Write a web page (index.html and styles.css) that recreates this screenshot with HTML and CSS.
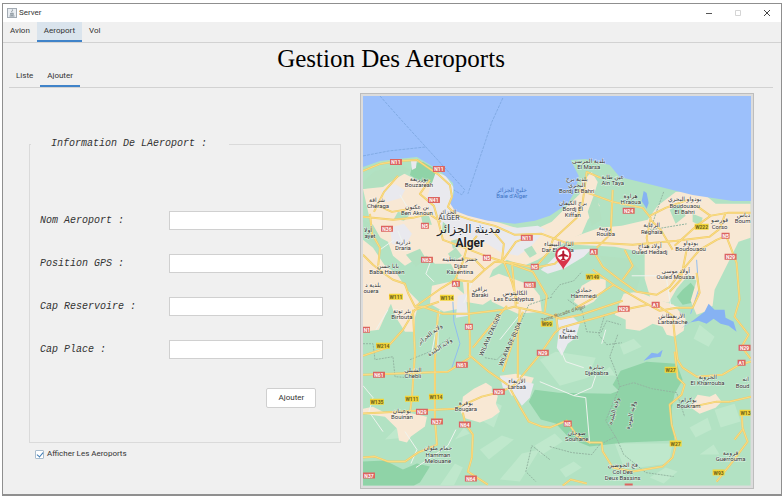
FILE: index.html
```html
<!DOCTYPE html>
<html lang="fr">
<head>
<meta charset="utf-8">
<title>Server</title>
<link rel="stylesheet" href="styles.css">
</head>
<body>
<div class="window">
  <header class="titlebar">
    <svg class="app-icon" viewBox="0 0 10 10" aria-hidden="true">
      <rect x=".5" y=".5" width="9" height="9" fill="#e9edf1" stroke="#a3abb3"/>
      <path d="M5.400 1.500c1 1-1.500 1.500-.4 3M3.200 5.300c.8.600 2.700.600 3.500 0M3.200 6.600c.8.600 2.700.600 3.500 0M2.500 8h5" fill="none" stroke="#66737e" stroke-width=".8"/>
    </svg>
    <span class="caption">Server</span>
    <div class="controls">
      <button type="button" aria-label="Minimize"><svg viewBox="0 0 8 8"><path d="M1 4.500h6" stroke="#555"/></svg></button>
      <button type="button" aria-label="Maximize" disabled><svg viewBox="0 0 8 8"><path d="M1.500 1.500h5v5h-5z" fill="none" stroke="#d5d5d5"/></svg></button>
      <button type="button" aria-label="Close"><svg viewBox="0 0 8 8"><path d="M1 1l6 6M7 1l-6 6" stroke="#444"/></svg></button>
    </div>
  </header>

  <nav class="tabs">
    <button type="button">Avion</button>
    <button type="button" class="active">Aeroport</button>
    <button type="button">Vol</button>
  </nav>

  <div class="heading">
    <nav class="subtabs">
      <button type="button">Liste</button>
      <button type="button" class="active">Ajouter</button>
    </nav>
    <h1>Gestion Des Aeroports</h1>
  </div>

  <main class="content">
    <form class="side">
      <fieldset>
        <legend>Information De LAeroport :</legend>
        <div class="fields">
          <label for="nom">Nom Aeroport :</label><input id="nom" type="text">
          <label for="gps">Position GPS :</label><input id="gps" type="text">
          <label for="reservoir">Cap Reservoire :</label><input id="reservoir" type="text">
          <label for="place">Cap Place :</label><input id="place" type="text">
        </div>
        <div class="actions"><button type="button">Ajouter</button></div>
      </fieldset>
      <label class="check"><input type="checkbox" checked>Afficher Les Aeroports</label>
    </form>

    <div class="map">
      <svg viewBox="363 96 388 390" role="img" aria-label="Alger">
        <rect class="land" x="363" y="96" width="388" height="390"/>

        <!-- relief -->
        <g class="relief-light">
          <path d="M440 486l15-22 8 4-9 18zM480 450l22-14 12 4-25 20zM500 480l22-26 18-4-20 32zM535 446l20-12 8 8-22 14zM385 440l14-14 8 12zM690 428l18-10 4 12-16 8zM650 478l16-10 12 4-14 12zM700 455l14-10 6 10zM600 375l10-8 6 9zM560 470l14-8 8 6-16 10zM620 345l14-6 8 8-18 8zM455 440l9-12 6 6z"/>
          <path d="M540 360l16-8 40 6-8 20-28 8zM615 444h58l-4 20-44 6zM700 325l15 12-6 10-15-8zM715 410l20-6 6 18-20 6zM490 400l12 6-8 22-14-8z"/>
        </g>
        <g class="forest">
          <path d="M413 163l10-1 14 8 6 10-3 6-10 3-10-8-10-6z"/>
          <path d="M535 390l24 3 52 1 8-3-6-6 8-14 26-9 30 2 6 16-8 14-3 15 1 18 2 14-50 2-35 4-20-8-14-15-15-4-12-18z"/>
          <path d="M363 462l22-1 18 9 14-6 13 3-10 16-6 3h-51z"/>
          <path d="M683 290l8-7 5 6-3 14-10 2-6-8z"/>
        </g>

        <!-- built-up areas -->
        <g class="urban">
          <path d="M363 189l14-3 12-10 14-3 14 7 22 6 14 8-2 10 16 10 36 10 20 6 10 24-10 12-16-6-14 10-8 18-14 0-12-8-8-16-16 0-8-8-12 4-10 6-12-10-5-14-15-8z"/>
          <path d="M363 240l10 8 12 18 12 8 10 16 12 12-4 16 0 14-10 0-10-16-4-12-4 8-8 18-16 2z"/>
          <path d="M432 286l18-4 14 12 0 14-20 4-14-8zM463 282l16-8 14 6 4 16-14 9-18-3z"/>
          <path d="M485 280l14-6 17 6 16 6 8 10 2 16-24 2-26-12z"/>
          <path d="M530 232l22-10 18-18 10-10 2-12 10-10 6 10-4 14 6 10-12 14-6 14-16 8-28 18-14 6z"/>
          <path d="M566 240l34-12 22-2 26-6 10-14 18-14 24-2 16 14 16 0h19v34l-12 4-14 28-10 20-2 16-8 6-8 3-6-14 6-20-8-6-12 14-8 14-18-4-6-20 0-26-30-6-40-2z"/>
          <path d="M582 286l14-8 10 2 0 8-12 14-12 6-8-6z"/>
          <path d="M624 294l14-2 18 7 18 6 12 14-2 12-9 6-8-2-4-8-10-3-7 4-6 3-14-2 0-9-11-5z"/>
          <path d="M363 409l10-2 12 6 24 0 18 4-2 10-14 10-4 6-8-2-2-12-12-12-22-3z"/>
          <path d="M463 397l11-8 12-6 6 4 0 5 6 4-2 8 4 8-8 6-12 5-14-4-5-6z"/>
          <path d="M690 407l8-12 12 2 6-3 6 8-6 6-16 6z"/>
          <path d="M500 376l16-2 18 4-6 14-16 4z"/>
        </g>
        <g class="city">
          <path d="M436 172l10 4 8 12-3 12-1 10 16 8 30 8 22 2 20-2 8 4-16 18-12 8-18-4-16-10-14 4-20-8-9-14-9-12-6-12z"/>
          <path d="M541 270l9-8 8-8 14-4 20-1-8 8-20 12-16 5z"/>
          <path d="M558 320l14-4 8 8-4 14-8 6-6 12-5-8 2-16zM500 376l8 2 26 6-4 14-8 8-9-14-10-4zM417 160l-1 8-4 2-1-9z"/>
          <path d="M458 296l8-2 2 22-12 2zM390 228l14-4 8 10-8 14-12-4zM381 190l14-6 10 6-4 8-14 4z"/>
        </g>
        <g class="parks">
          <path d="M363 182l12-11 26-6 10 5-14 8-14 9-20 2zM398 212l12 3-6 6-10-2zM421 216l8 0 3 9-9 0zM451 241l8-2 2 8-8 2zM443 222l5 4-2 8-4-4zM596 190l6 30-10 6-4-14zM600 256l30 3 12 14-6 20-20-8zM670 210l10-6 6 12-10 8zM693 214l10 4-2 8-8-4zM363 220l10 5 8 14-4 8-10-8zM524 250l8-4 5 8-7 4zM406 255l14-6 6 10-10 8zM448 254l8-6 6 8-8 6z"/>
        </g>

        <!-- sea -->
        <path class="sea" d="M363 96v71l17-6 18-2 19-2 10 6 13 8 13 12 1 10-4 10 5 8 13 5 20 5 27 3 20-3 15-5 18-12 8-14 3-14-8-16 15-1 24 6 10 12 33 8 40 10 40 6h21V96z"/>
        <path class="ferry" d="M363 156l26-5 37-4M380 96l24 27 61 67-3 5-8-5M503 98l-11 24-16 48-8 24"/>
        <path class="water" d="M644 191l3 2 2 10-2 6-5-8zM681 329l12-8 12-9 4-8 6 6 10 0 1 8 8 4 3 10-8-6-8-2-7-5-7 5-8-3-10 2zM644 361l8-8 6 1 5-4-2 7-8 1z"/>
        <path class="river" d="M697 260l2 30-4 12-4 12M453 302l1 20 6 22-8 24M480 225l3 8"/>

        <!-- boundaries -->
        <path class="boundary" d="M363 344l10 0 2 16 18-3 2 20 14 1M552 295l8-10 14-4 8-9M568 300l14 10 5 22 14 1 6-12 14 4M485 358l12 2 12-12 20-43 24-8M618 335l-8 22 5 12 5 18-14 34 12 20 6 14 22 18 28 4M550 447l22 6 20 2 8-10 16-8M620 387l14-4 18 6 25 4 8 24M664 192l-8 22-5 16 36-6M550 460l-18-14-6 26 10 10M605 315l-6 20 8 10 15-2M410 360l20-8 20-14"/>

        <!-- minor roads -->
        <path class="minor" d="M363 386l10 12-4 14 14 20M398 231l8 20M438 330v20M405 432l12 18-6 14M456 430l-8 16-20 14-12 8M632 276h35M667 280l4 26 10 2M432 258l-6 16 8 8M540 382l34 14 18-8 4-12M606 330l-4 14M574 396l12 2 4 46M400 195l12 20M380 250l14-10M500 340l24-30M440 310l-8 42M472 283l-8 20M388 310l-12 20M560 348l6 14 18 6"/>

        <!-- main roads -->
        <defs>
          <g id="roads">
            <path d="M363 171l17-7 18-3 19-1 10 7 12 8 11 10 2 12-4 10 8 8 15 5 24 6 20 9 27-1 27 10 28-1 36 2 44-4 33-4 10-8 6-16"/>
            <path d="M363 255l10 10 10 8 10 7 12 4 3 9 7 14 8 0 20 7h26l34-4 11-3 29 6 18 6 20-4 42-14"/>
            <path d="M370 214l2 20 8 14-2 20M363 217l30 3 20-2 16-4 12 8M378 206l14 6 18-3M398 176l-14 16-10 20M415 307l27-19 13-8 17 2 13-12 10-8 17 1 23 5 20-4 15-14"/>
            <path d="M430 180l-10 14 14 12 4 14 5 20 22 8 23 9 16 5 8 20 6 22M455 280l8-18 4-14 10-12M492 230l12 14-2 18M502 262l14-20 10-4M505 262l28 10 14 24-2 16M512 263l2 20 2 24M485 270l-10-10-12-2M535 268l14-16 4-12 24-22 6-16 4-30 14 6"/>
            <path d="M593 250l10 17 17 13 17 12 20 3 13-8 13-17 17-20 17-10 12-5M625 250l8 16-10 14M614 285l26 15 20 11 17-3h16l7-15-3-20M593 270l21 15-20 13-18 10M577 190l14 4 22 8 30 6 8 10-4 20 2 10M613 190l-2 44-14 14M650 216l16-8 22-8M651 220l10 10 12 20M697 206l14 10-14 10-22 20M710 216l18-3 23 0M687 250l-6 30-11 12"/>
            <path d="M657 305l16 11 2 20 3 24 5 8 14 9 26-2 17-10 14-4M675 352l3 26 7 7-3 10-12 10 2 20 5 17-4 16-10 9-30 5-20-4-10-16-1-9h-12l-13-7-10-15-17 7-8-1-13-5-10-17-10-19-20-14-20-17"/>
            <path d="M468 283l2 57v18l-22 14-86 3M438 314l-3 46v60l2 25-19 8-13 9h-17l-13-5-12 1M413 310l2 43-3 45-2 15M362 414l93-5 27-12 20-5 13-7 25-30 15-22 6-5 39-11 24-7 24-5"/>
            <path d="M463 413l2 10 8 12-1 23-4 14 20 13M518 378v-40l2-30M503 372l20-60M473 348l34-42M403 330l12-20 24-8M363 356l24-8 16-18M558 330l-2-16"/>
            <path d="M727 237l10 26 3 37-5 17 14 18-7 12 9 12M742 412l1 16 5 14-15 20-16 20M693 407l24-5h13l22-5M743 430l-8 10M563 486l8-6 16 4"/>
          </g>
        </defs>
        <use href="#roads" class="case"/>
        <use href="#roads" class="road"/>

        <!-- route shields -->
        <g class="shield red">
          <path d="M390 159h12v6h-12zM433 166h12v6h-12zM428 197h12v6h-12zM421 223h8v6h-8zM381 226h12v6h-12zM521 235h12v6h-12zM483 255h8v6h-8zM531 264h8v6h-8zM421 257h12v6h-12zM452 281h8v6h-8zM524 282h12v6h-12zM465 324h8v6h-8zM363 327h7v6h-7zM537 350h12v6h-12zM590 249h8v6h-8zM722 233h8v6h-8zM725 254h12v6h-12zM618 306h12v6h-12zM652 302h8v6h-8zM739 345h12v6h-12zM623 208h12v6h-12zM373 372h12v6h-12zM456 362h12v6h-12zM416 409h12v6h-12zM431 419h12v6h-12zM459 422h12v6h-12zM493 389h12v6h-12zM363 473h12v6h-12zM465 476h12v6h-12zM738 360h8v6h-8zM564 421h8v6h-8zM625 484h8v2h-8z"/>
          <text x="396" y="164">N11</text><text x="439" y="171">N11</text><text x="434" y="202">N41</text><text x="425" y="228">N5</text><text x="387" y="231">N36</text><text x="527" y="240">N11</text><text x="487" y="260">N5</text><text x="535" y="269">N5</text><text x="427" y="262">N63</text><text x="456" y="286">A1</text><text x="530" y="287">N61</text><text x="469" y="329">N8</text><text x="367" y="332">N1</text><text x="543" y="355">N29</text><text x="594" y="254">A1</text><text x="726" y="238">N5</text><text x="731" y="259">N29</text><text x="624" y="311">N29</text><text x="656" y="307">A1</text><text x="745" y="350">N29</text><text x="629" y="213">N24</text><text x="379" y="377">N61</text><text x="462" y="367">N61</text><text x="422" y="414">N29</text><text x="437" y="424">N37</text><text x="465" y="427">N64</text><text x="499" y="394">N29</text><text x="369" y="478">N37</text><text x="471" y="481">N64</text><text x="742" y="365">A1</text><text x="568" y="426">N8</text>
        </g>
        <g class="shield yellow">
          <path d="M389 294h14v6h-14zM440 295h14v6h-14zM541 321h12v6h-12zM376 343h14v6h-14zM586 274h14v6h-14zM695 224h14v6h-14zM370 399h14v6h-14zM405 396h14v6h-14zM429 394h14v6h-14zM665 367h12v6h-12zM740 410h11v6h-11zM670 441h12v6h-12zM713 470h12v6h-12z"/>
          <text x="396" y="299">W111</text><text x="447" y="300">W114</text><text x="547" y="326">W99</text><text x="383" y="348">W214</text><text x="593" y="279">W149</text><text x="702" y="229">W222</text><text x="377" y="404">W135</text><text x="412" y="401">W111</text><text x="436" y="399">W114</text><text x="671" y="372">W27</text><text x="746" y="415">W13</text><text x="676" y="446">W27</text><text x="719" y="475">W93</text>
        </g>

        <!-- places -->
        <g class="place">
          <text x="419" y="181">بوزريعة</text><text x="419" y="187">Bouzareah</text>
          <text x="377" y="202">شراقة</text><text x="378" y="208">Chéraga</text>
          <text x="417" y="209">بن عكنون</text><text x="417" y="215">Ben Aknoun</text>
          <text x="448" y="214">الجزائر</text><text x="449" y="220" class="caps">ALGER</text>
          <text x="368" y="232">أولا</text><text x="370" y="238">ayet</text>
          <text x="403" y="244">درارية</text><text x="403" y="250">Draria</text>
          <text x="388" y="268">بابا حسن</text><text x="387" y="274">Baba Hassen</text>
          <text x="373" y="287">بلدية د</text><text x="371" y="293">ouera</text>
          <text x="402" y="313">بئر توتة</text><text x="402" y="319">Birtouta</text>
          <text x="460" y="261">جسر قسنطينة</text><text x="461" y="268">Djasr</text><text x="460" y="274">Kasentina</text>
          <text x="480" y="291">براقي</text><text x="480" y="297">Baraki</text>
          <text x="515" y="295">الكاليتوس</text><text x="514" y="301">Les Eucalyptus</text>
          <text x="589" y="163">بلدية المرسى</text><text x="589" y="169">El Marsa</text>
          <text x="613" y="179">عين طاية</text><text x="613" y="185">Aïn Taya</text>
          <text x="577" y="181">بلدية برج</text><text x="577" y="187">البحري</text><text x="577" y="193">Bordj El Bahri</text>
          <text x="573" y="205">برج الكيفان</text><text x="573" y="211">Bordj El</text><text x="573" y="217">Kiffan</text>
          <text x="631" y="198">هراوة</text><text x="631" y="204">H'raoua</text>
          <text x="685" y="201">بودواو البحري</text><text x="685" y="208">Boudouaou</text><text x="685" y="214">El Bahri</text>
          <text x="744" y="217">دباس</text><text x="743" y="223">Boum</text>
          <text x="720" y="222">قورصو</text><text x="720" y="229">Corso</text>
          <text x="605" y="230">رويبة</text><text x="606" y="236">Rouiba</text>
          <text x="652" y="227">الرغاية</text><text x="652" y="234">Réghaïa</text>
          <text x="559" y="246">الدار البيضاء</text><text x="558" y="252">Dar El Beïda</text>
          <text x="650" y="248">أولاد هداج</text><text x="650" y="254">Ouled Hedadj</text>
          <text x="691" y="245">بودواو</text><text x="691" y="251">Boudouaou</text>
          <text x="676" y="273">أولاد موسى</text><text x="676" y="279">Ouled Moussa</text>
          <text x="584" y="292">حمادي</text><text x="584" y="298">Hammedi</text>
          <text x="672" y="318">الأربعطاش</text><text x="673" y="324">Larbatache</text>
          <text x="569" y="332">مفتاح</text><text x="569" y="339">Meftah</text>
          <text x="413" y="372">الشبلي</text><text x="413" y="378">Chebli</text>
          <text x="402" y="413">بوعينان</text><text x="402" y="419">Bouinan</text>
          <text x="466" y="405">بوقرة</text><text x="466" y="411">Bougara</text>
          <text x="438" y="450">حمام ملوان</text><text x="438" y="457">Hamman</text><text x="438" y="463">Melouane</text>
          <text x="517" y="383">الأربعاء</text><text x="517" y="389">Larbaâ</text>
          <text x="597" y="369">جبابرة</text><text x="597" y="375">Djebabra</text>
          <text x="577" y="435">صوحان</text><text x="577" y="441">Souhane</text>
          <text x="623" y="467">فج الحوضين</text><text x="623" y="474">Col Des</text><text x="623" y="480">Deux Bassins</text>
          <text x="708" y="379">الخروبة</text><text x="708" y="385">El Kharrouba</text>
          <text x="746" y="381">انه</text><text x="743" y="388">Boud</text>
          <text x="689" y="402">بوكرام</text><text x="689" y="408">Boukram</text>
          <text x="731" y="455">قرومة</text><text x="731" y="461">Guerrouma</text>
        </g>
        <g class="place region">
          <text transform="translate(492 336) rotate(-66)">WILAYA D'ALGER</text>
          <text transform="translate(512 345) rotate(-66)">WILAYA DE BLIDA</text>
          <text transform="translate(431 336) rotate(-38)">ولاية الجزائر</text>
          <text transform="translate(441 349) rotate(-34)">ولاية البليدة</text>
          <text transform="translate(616 412) rotate(-74)">ولاية البليدة</text>
          <text transform="translate(633 416) rotate(-76)">ولاية البويرة</text>
        </g>
        <text class="street" transform="translate(564 315) rotate(-18)">2eme Rocade d'Alger</text>
        <g class="bay"><text x="512" y="192">خليج الجزائر</text><text x="512" y="198">Baie d'Alger</text></g>
        <g class="capital"><text x="469" y="233">مدينة الجزائر</text><text x="470" y="247">Alger</text></g>

        <!-- airport marker -->
        <path d="M563.500 270c-2-6-8-9-8-15a8 8 0 0 1 16 0c0 6-6 9-8 15z" fill="#d9344a"/>
        <circle cx="563.500" cy="255" r="6" fill="#fff"/>
        <path d="M563.500 250.500l1 1v2.500l4 2v1.200l-4-.8v2.300l1.500 1.200v.8l-2.500-.6-2.500.6v-.8l1.500-1.200v-2.300l-4 .8V256l4-2v-2.500z" fill="#b3192f"/>
      </svg>
    </div>
  </main>
</div>
</body>
</html>
```

FILE: styles.css
```css
* { box-sizing: border-box; }

body {
  margin: 0;
  min-height: 100vh;
  padding: 3px 1px 2px 2px;
  display: flex;
  background: #fff;
  color: #333;
  font: 8px/12px Roboto, "Open Sans", sans-serif;
}

button {
  padding: 0;
  border: 0;
  background: none;
  color: inherit;
  font: inherit;
}

.window {
  flex: 1;
  display: flex;
  flex-direction: column;
  border: 1px solid #8f8f8f;
  border-bottom-width: 2px;
  background: #f0f0f0;
}

.titlebar {
  display: flex;
  align-items: center;
  gap: 2px;
  height: 18px;
  padding-left: 4px;
  background: #fff;
}
.app-icon { width: 10px; height: 10px; }
.controls { display: flex; margin-left: auto; }
.controls button { width: 29px; height: 18px; display: grid; place-items: center; }
.controls svg { width: 8px; height: 8px; }

.tabs {
  display: flex;
  height: 21px;
  border-bottom: 1px solid #d2d2d2;
}
.tabs button { padding: 0 7px; border-bottom: 2px solid transparent; }
.tabs .active { background: #dae4ed; }
.tabs .active, .subtabs .active { border-bottom-color: #4083c9; }

.heading {
  display: grid;
  grid-template-columns: 1fr auto 1fr;
  height: 45px;
  margin: 0 8px 0 6px;
  border-bottom: 1px solid #d2d2d2;
}
.heading h1 {
  margin: 2px 0 0;
  color: #000;
  font: 25px/28px "Liberation Serif", serif;
}
.subtabs { display: flex; align-self: end; height: 21px; }
.subtabs button { padding: 0 7px; border-bottom: 2px solid transparent; }

.content {
  flex: 1;
  display: grid;
  grid-template-columns: 312fr 393fr;
  gap: 19px;
  align-items: start;
  padding: 5px 27px 5px 26px;
}

.side { padding-top: 44px; }
fieldset {
  margin: 0;
  padding: 60px 17px 34px 10px;
  border: 1px solid #dadada;
}
legend {
  width: 70%;
  margin-left: -9px;
  padding: 0 0 0 20px;
}
legend, .fields {
  font: italic 10px/14px "Liberation Mono", monospace;
}
.fields {
  display: grid;
  grid-template-columns: 129fr 155fr;
  gap: 24px 0;
  align-items: center;
}
.fields input {
  width: 100%;
  height: 19px;
  padding: 0 4px;
  border: 1px solid #d0d0d0;
  background: #fff;
  font: inherit;
}
.actions { display: flex; justify-content: flex-end; margin: 29px 7px 0 0; }
.actions button {
  width: 50px;
  height: 20px;
  border: 1px solid #cfcfcf;
  border-radius: 2px;
  background: #fff;
}

.check { display: flex; align-items: center; gap: 3px; margin: 5px 0 0 6px; }
.check input {
  appearance: none;
  width: 9px;
  height: 9px;
  margin: 0;
  border: 1px solid #a9bccd;
  border-radius: 1px;
  background: #fff;
  position: relative;
}
.check input:checked::after {
  content: "";
  position: absolute;
  left: 2px;
  top: 0;
  width: 3px;
  height: 5px;
  border: solid #3f7cb5;
  border-width: 0 1px 1px 0;
  transform: rotate(40deg);
}

.map { padding: 2px; border: 1px solid #bdbdbd; background: #dcdcdc; }
.map svg { display: block; width: 100%; height: auto; }
.land { fill: #b2e2c3; }
.relief-light { fill: #bfe8cc; }
.forest { fill: #8fd3a7; }
.urban { fill: #f8e8d4; }
.city { fill: #e9e9ee; }
.parks { fill: #b2e0c0; }
.sea { fill: #9cc0fb; }
.water { fill: #86b2f3; }
.river { fill: none; stroke: #90bdf0; stroke-width: 1; }
.ferry { fill: none; stroke: #82abe4; stroke-width: 1; stroke-dasharray: 3 1; }
.boundary { fill: none; stroke: #93b5a1; stroke-width: 1; stroke-dasharray: 2 1; }
.minor { fill: none; stroke: #eef3ee; stroke-width: 1; }
.case { fill: none; stroke: #f0cb68; stroke-width: 2; stroke-linejoin: round; }
.road { fill: none; stroke: #fadd86; stroke-width: 1; stroke-linejoin: round; }

.map text { text-anchor: middle; }
.shield { font: bold 5px Roboto, sans-serif; }
.red path { fill: #dc6460; }
.red text { fill: #fff; }
.yellow path { fill: #f2d53a; }
.yellow text { fill: #6b6020; }
.place, .bay, .street { font: 6px Roboto, "DejaVu Sans", sans-serif; }
.place {
  fill: #333;
  stroke: #fff;
  stroke-opacity: .6;
  stroke-width: 1px;
  paint-order: stroke;
}
.place .caps { font-size: 7px; }
.street { font-size: 5px; fill: #7d6c4c; }
.bay { fill: #3f74c4; }
.capital {
  fill: #222;
  stroke: #fff;
  stroke-opacity: .7;
  stroke-width: 1px;
  paint-order: stroke;
  font: bold 12px Roboto, "DejaVu Sans", sans-serif;
}
.capital text:first-child { font-weight: 400; }
```
